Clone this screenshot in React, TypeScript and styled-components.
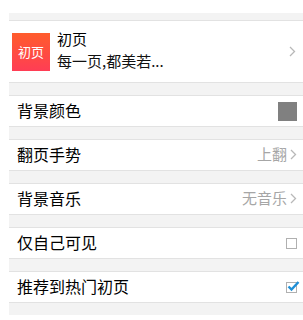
import React from "react";
import styled, { createGlobalStyle } from "styled-components";

const GlobalStyle = createGlobalStyle`
  body {
    margin: 0;
    background: #ffffff;
    font-family: "Noto Sans CJK SC", "Noto Sans", sans-serif;
  }
`;

interface RowItem {
  label: string;
  kind: "color" | "value" | "check";
  value?: string;
  checked?: boolean;
}

const rows: RowItem[] = [
  { label: "背景颜色", kind: "color" },
  { label: "翻页手势", kind: "value", value: "上翻" },
  { label: "背景音乐", kind: "value", value: "无音乐" },
  { label: "仅自己可见", kind: "check", checked: false },
  { label: "推荐到热门初页", kind: "check", checked: true },
];

function Chevron() {
  return (
    <svg width="7" height="11" viewBox="0 0 7 11">
      <path d="M1 1 L5.5 5.5 L1 10" fill="none" stroke="#b8b8b8" strokeWidth="1.3" />
    </svg>
  );
}

function CheckBox({ checked }: { checked?: boolean }) {
  return (
    <Box>
      {checked && (
        <svg width="13" height="11" viewBox="0 0 13 11" style={{ position: "absolute", left: 0, top: -2 }}>
          <path d="M1.5 5.5 L4.5 8.5 L11.5 1" fill="none" stroke="#1f8fd6" strokeWidth="2.4" />
        </svg>
      )}
    </Box>
  );
}

export default function App() {
  return (
    <>
      <GlobalStyle />
      <Page>
        <TopBand />
        <Card>
          <Logo>初页</Logo>
          <CardText>
            <CardTitle>初页</CardTitle>
            <CardSub>每一页,都美若...</CardSub>
          </CardText>
          <Chevron />
        </Card>
        {rows.map((r) => (
          <React.Fragment key={r.label}>
            <Band />
            <Row>
              <Label>{r.label}</Label>
              {r.kind === "color" && <Swatch />}
              {r.kind === "value" && (
                <Value>
                  {r.value}
                  <Chevron />
                </Value>
              )}
              {r.kind === "check" && <CheckBox checked={r.checked} />}
            </Row>
          </React.Fragment>
        ))}
        <Band />
      </Page>
    </>
  );
}

const Page = styled.div`
  padding: 13px 0 0 9px;
  height: 320px;
  box-sizing: border-box;
  overflow: hidden;
`;

const TopBand = styled.div`
  height: 7px;
  background: #f3f3f3;
`;

const Band = styled.div`
  height: 12px;
  background: #f3f3f3;
`;

const Card = styled.div`
  display: flex;
  align-items: center;
  height: 61px;
  border-top: 1px solid #e2e2e2;
  border-bottom: 1px solid #e2e2e2;
  padding: 0 7px 0 3px;
  background: #fff;
`;

const Logo = styled.div`
  width: 38px;
  height: 38px;
  display: flex;
  align-items: center;
  justify-content: center;
  background: linear-gradient(180deg, #ff5c2c 0%, #ff3d55 100%);
  color: #fff;
  font-size: 13px;
  flex-shrink: 0;
`;

const CardText = styled.div`
  flex: 1;
  display: flex;
  flex-direction: column;
  margin-left: 7px;
  gap: 3px;
  padding-bottom: 4px;
`;

const CardTitle = styled.div`
  font-size: 15px;
  line-height: 19px;
  color: #000;
`;

const CardSub = styled.div`
  font-size: 15px;
  line-height: 19px;
  color: #111;
`;

const Row = styled.div`
  display: flex;
  align-items: center;
  justify-content: space-between;
  height: 30px;
  border-top: 1px solid #e2e2e2;
  border-bottom: 1px solid #e2e2e2;
  padding: 0 6px 0 8px;
  background: #fff;
`;

const Label = styled.div`
  font-size: 16px;
  line-height: 20px;
  color: #000;
  margin-top: -2px;
`;

const Swatch = styled.div`
  width: 19px;
  height: 19px;
  background: #808080;
`;

const Value = styled.div`
  display: flex;
  align-items: center;
  gap: 3px;
  font-size: 15px;
  line-height: 20px;
  margin-top: -2px;
  color: #a6a6a6;
`;

const Box = styled.div`
  position: relative;
  width: 9px;
  height: 9px;
  border: 1px solid #b0b0b0;
`;
